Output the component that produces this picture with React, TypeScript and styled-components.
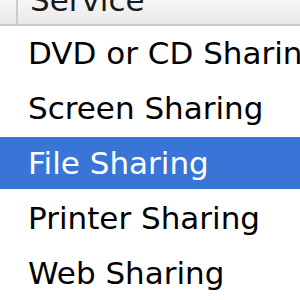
import React from "react";
import styled, { createGlobalStyle } from "styled-components";

const Global = createGlobalStyle`
  html, body { margin: 0; padding: 0; background: #ffffff; }
  body { width: 300px; height: 300px; overflow: hidden; }
`;

const Table = styled.div`
  width: 300px;
  height: 300px;
  overflow: hidden;
  font-family: "DejaVu Sans", "Liberation Sans", sans-serif;
  background: #ffffff;
`;

const Header = styled.div`
  display: flex;
  height: 24px;
  overflow: hidden;
  background: linear-gradient(#f6f6f6, #efefef 60%, #e8e8e8);
  border-bottom: 2px solid #c6c6c6;
`;

const CheckCol = styled.div`
  width: 16px;
  flex: none;
  border-right: 2px solid #cccccc;
`;

const HeaderLabel = styled.div`
  padding-left: 12px;
  font-size: 31px;
  line-height: 31px;
  margin-top: -15px;
  color: #1a1a1a;
  white-space: nowrap;
`;

const Rows = styled.div`
  display: flex;
  flex-direction: column;
`;

const Row = styled.div<{ $selected?: boolean }>`
  box-sizing: border-box;
  height: 55px;
  display: flex;
  align-items: center;
  padding-left: 28px;
  font-size: 31px;
  white-space: nowrap;
  border-top: 1px solid transparent;
  border-bottom: 2px solid transparent;
  background-clip: padding-box;
  color: ${(p) => (p.$selected ? "#ffffff" : "#000000")};
  background-color: ${(p) => (p.$selected ? "#3875d7" : "transparent")};
`;

const services = [
  "DVD or CD Sharing",
  "Screen Sharing",
  "File Sharing",
  "Printer Sharing",
  "Web Sharing",
];

export default function App() {
  return (
    <Table>
      <Global />
      <Header>
        <CheckCol />
        <HeaderLabel>Service</HeaderLabel>
      </Header>
      <Rows>
        {services.map((s) => (
          <Row key={s} $selected={s === "File Sharing"}>
            {s}
          </Row>
        ))}
      </Rows>
    </Table>
  );
}
